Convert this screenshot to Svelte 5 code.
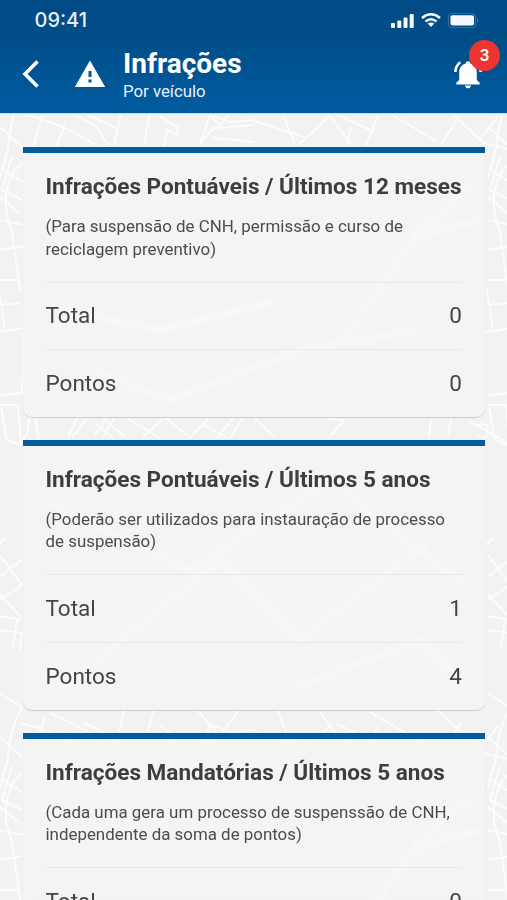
<script lang="ts">
	type Row = { label: string; value: number };
	type Card = { title: string; note: string[]; rows: Row[] };

	const notifications = 3;

	const cards: Card[] = [
		{
			title: 'Infrações Pontuáveis / Últimos 12 meses',
			note: ['(Para suspensão de CNH, permissão e curso de', 'reciclagem preventivo)'],
			rows: [{ label: 'Total', value: 0 }, { label: 'Pontos', value: 0 }]
		},
		{
			title: 'Infrações Pontuáveis / Últimos 5 anos',
			note: ['(Poderão ser utilizados para instauração de processo', 'de suspensão)'],
			rows: [{ label: 'Total', value: 1 }, { label: 'Pontos', value: 4 }]
		},
		{
			title: 'Infrações Mandatórias / Últimos 5 anos',
			note: ['(Cada uma gera um processo de suspenssão de CNH,', 'independente da soma de pontos)'],
			rows: [{ label: 'Total', value: 0 }, { label: 'Pontos', value: 0 }]
		}
	];

	// Street map, repeated every TILE_W x TILE_H
	const TILE_W = 488;
	const TILE_H = 610;
	const tiles = [[0, 0], [TILE_W, 0], [0, TILE_H], [TILE_W, TILE_H]];

	const streets = [
		'M0 83L23 98M23 97Q10 116 8 148L0 178M0 127L23 148M20 113Q60 122 95 145M45 105L33 148',
		'M66 122L57 146M50 103L95 125L108 145M84 113L118 129M124 100L114 146M154 100Q146 125 145 143',
		'M160 116L178 128L177 135L167 130L164 146M211 113L200 143L214 128L254 125M213 138L254 142M213 116L230 122L254 120',
		'M198 101L220 126L238 101M254 121L304 137M278 100L294 143M331 115L310 134L298 145M320 102L350 143M337 114L374 132M377 117L366 146M351 127L347 144',
		'M370 102L438 142M461 113L442 143M437 100L484 143L507 149M499 115L478 142',
		'M23 163Q11 170 7 190T12 232L20 290M0 168L22 182M12 156L2 190L22 200M0 197L20 213M0 220L23 225M0 250L23 246M0 280L20 280',
		'M0 305L20 303M-1 290L5 330M-3 332L23 328M0 395L22 393L24 330M0 405L18 405L21 445M1 407L7 440L20 445L27 433L30 415M35 418L39 440',
		'M77 418L68 437M87 418L72 438M107 418L94 436M114 418L103 438M95 423L113 438M103 418L125 437M127 418L160 438M164 418L142 438M166 418L190 438L209 418M200 423L227 438M233 418L217 438M243 418L230 438M254 418L276 438',
		'M328 419L344 420L329 438M431 418L429 438M451 418L448 438M468 420L507 443M470 424L488 425L486 438L475 436',
		'M-2 545L5 538M0 555L22 585L0 600M22 560L0 577M0 595L21 617M0 616L22 620M17 620L13 648M0 630L22 633L20 650'
	];

	// Wide streets, only seen softened through the cards
	const avenues = [
		'M410 244Q440 226 482 221M340 345L420 230L475 185M60 310L160 330L280 300M90 370L170 400L300 350L420 330',
		'M40 500L190 570L330 480L470 590M60 690L220 560L300 640L430 540M290 690L420 640L470 690'
	];
</script>

<div class="screen">
	<svg class="map" viewBox="0 0 507 900" aria-hidden="true">
		{#each tiles as [x, y]}
			<g transform="translate({x} {y})">
				{#each streets as d}
					<path {d} />
				{/each}
				{#each avenues as d}
					<path {d} class="avenue" />
				{/each}
			</g>
		{/each}
	</svg>

	<header>
		<div class="status">
			<span class="time">09:41</span>
			<svg width="88" height="18" viewBox="0 0 88 18">
				<!-- signal -->
				<rect x="0" y="12" width="4" height="5" rx="1" />
				<rect x="6.300" y="9.500" width="4" height="7.500" rx="1" />
				<rect x="12.500" y="6.500" width="4" height="10.500" rx="1" />
				<rect x="18.700" y="3" width="4" height="14" rx="1" />
				<!-- wifi -->
				<g class="arcs">
					<path d="M31 7Q40 -0.500 49 7" />
					<path d="M34.500 10.500Q40 6 45.500 10.500" />
				</g>
				<path d="M36.700 12.600Q40 10.200 43.300 12.600L40 16Z" />
				<!-- battery -->
				<rect class="case" x="57.500" y="2.500" width="27" height="14" rx="3.500" />
				<rect x="59.500" y="4.300" width="23.500" height="10.200" rx="2" />
				<path class="tip" d="M86 7v5q2-2.500 0-5Z" />
			</svg>
		</div>
		<div class="bar">
			<svg class="back" width="18" height="28" viewBox="0 0 18 28">
				<path d="M15.500 1.500L3 14L15.500 26.500" />
			</svg>
			<svg class="alert" width="32" height="28" viewBox="0 0 32 28">
				<path d="M16 0.500L31.200 27H0.800Z" />
				<path class="mark" d="M14.500 11h3v6h-3zM14.500 19.500h3v3h-3z" />
			</svg>
			<div class="heading">
				<h1>Infrações</h1>
				<p>Por veículo</p>
			</div>
			<div class="bell">
				<svg width="32" height="32" viewBox="0 0 32 32">
					<path d="M16 4.200c1.400 0 2.300 0.900 2.300 2.200 4.300 1.300 6.500 4.500 6.500 8.800v7.800l2.900 2.800v1.600H4.300v-1.600l2.900-2.800V15.200c0-4.300 2.200-7.500 6.500-8.800C13.700 5.100 14.600 4.200 16 4.200z" />
					<path d="M12.900 28.500h6.200q-.5 2.700-3.100 2.700t-3.100-2.700z" />
					<path class="ring" d="M8.300 5.200Q3.700 8.500 3.300 15M23.700 5.200Q28.300 8.500 28.700 15" />
				</svg>
				<span class="badge">{notifications}</span>
			</div>
		</div>
	</header>

	<main>
		{#each cards as card}
			<section class="card">
				<h2>{card.title}</h2>
				<p class="note">
					{#each card.note as line}
						<span>{line}</span>
					{/each}
				</p>
				{#each card.rows as row}
					<div class="row">
						<span>{row.label}</span>
						<span>{row.value}</span>
					</div>
				{/each}
			</section>
		{/each}
	</main>
</div>

<style>
	:global(body) {
		background: #f2f2f2;
	}
	.screen {
		position: relative;
		height: 900px;
		overflow: hidden;
		background: #f2f2f2;
		font-family: Roboto, 'Liberation Sans', sans-serif;
		color: #454545;
	}
	.map {
		position: absolute;
		inset: 0;
		width: 100%;
		height: 100%;
		fill: none;
		stroke: #fcfcfc;
		stroke-width: 2;
		stroke-linejoin: round;
	}
	.avenue { stroke-width: 7; }

	header {
		position: relative;
		box-sizing: border-box;
		height: 114px;
		background: linear-gradient(#004b85 0%, #004e89 35%, #005ca0 100%);
		border-bottom: 1px solid #cbdcee;
		color: #fff;
	}
	.status {
		display: flex;
		justify-content: space-between;
		align-items: center;
		height: 40px;
		padding: 0 28px 0 34.500px;
	}
	.status svg { fill: #f5f8fc; }
	.time {
		font: 500 20px/40px Inter, sans-serif;
		color: #e6eef6;
	}
	.arcs { fill: none; stroke: #f5f8fc; stroke-width: 2.600; }
	.case { fill: none; stroke: #42649b; stroke-width: 1.200; }
	.tip { fill: #6684b3; }

	.bar {
		display: flex;
		align-items: flex-start;
		padding: 0 7px 0 22px;
	}
	.back {
		margin-top: 20px;
		fill: none;
		stroke: #fff;
		stroke-width: 3.600;
	}
	.alert {
		margin: 20px 0 0 34px;
		fill: #fff;
	}
	.alert .mark { fill: #00569a; }
	.heading { margin: 6.500px 0 0 17px; flex: 1; }
	h1 {
		margin: 0;
		font-size: 28px;
		font-weight: 700;
		line-height: 33px;
	}
	.heading p {
		margin: 0;
		font-size: 16.800px;
		line-height: 22px;
		color: #e8f1fa;
	}
	.bell {
		position: relative;
		width: 49px;
		height: 60px;
	}
	.bell svg { margin: 17px 0 0 1px; fill: #fff; }
	.bell .ring { fill: none; stroke: #fff; stroke-width: 2.600; }
	.badge {
		position: absolute;
		top: 0;
		right: 0;
		width: 31px;
		height: 31px;
		border-radius: 50%;
		background: #ec3431;
		font-size: 17px;
		font-weight: 600;
		line-height: 31px;
		text-align: center;
	}

	main {
		position: relative;
		display: flex;
		flex-direction: column;
		gap: 22.700px;
		padding: 33.200px 22.500px 0 23px;
	}
	.card {
		box-sizing: border-box;
		height: 270px;
		flex-shrink: 0;
		padding: 20px 22.500px 0;
		border-top: 6px solid #005b9f;
		border-radius: 0 0 9px 9px;
		background: rgba(245, 245, 246, 0.6);
		backdrop-filter: blur(3px);
		box-shadow: 0 1px 1px rgba(0, 0, 0, 0.15);
	}
	h2 {
		margin: 0;
		font-size: 22.550px;
		font-weight: 700;
		line-height: 27px;
		white-space: nowrap;
		color: #3e3e40;
	}
	.note {
		margin: 15px 0 21.400px;
		font-size: 16.900px;
		line-height: 22.500px;
		white-space: nowrap;
		color: #4c4c4c;
	}
	.note span { display: block; }
	.row {
		display: flex;
		justify-content: space-between;
		align-items: center;
		box-sizing: border-box;
		height: 67.600px;
		padding-bottom: 1.200px;
		border-top: 1px solid #e8e8e8;
		font-size: 22.500px;
	}
</style>
